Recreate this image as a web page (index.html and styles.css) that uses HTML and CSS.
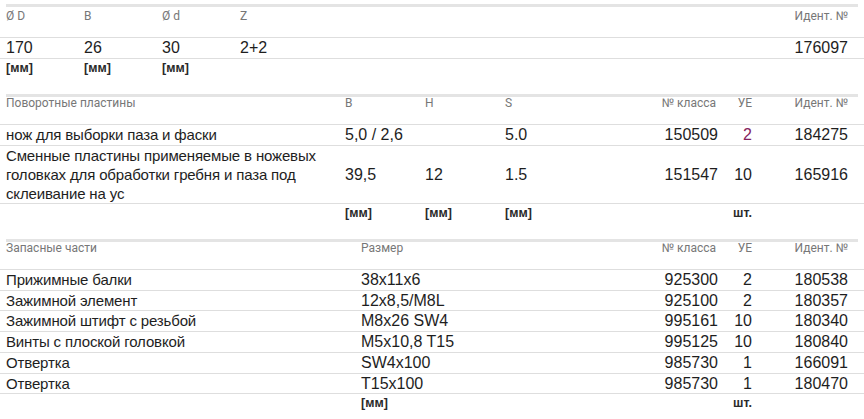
FILE: index.html
```html
<!DOCTYPE html>
<html lang="ru">
<head>
<meta charset="utf-8">
<title>Таблица</title>
<link rel="stylesheet" href="styles.css">
</head>
<body>
<section class="tbl t1">
  <div class="grid g1 head">
    <div>Ø D</div><div>B</div><div>Ø d</div><div>Z</div><div class="r">Идент. №</div>
  </div>
  <div class="grid g1 row">
    <div>170</div><div>26</div><div>30</div><div>2+2</div><div class="r">176097</div>
  </div>
  <div class="grid g1 units">
    <div>[мм]</div><div>[мм]</div><div>[мм]</div><div></div><div></div>
  </div>
</section>

<section class="tbl t2">
  <div class="grid g2 head">
    <div>Поворотные пластины</div><div>B</div><div>H</div><div>S</div><div class="r">№ класса</div><div class="r">УЕ</div><div class="r">Идент. №</div>
  </div>
  <div class="grid g2 row">
    <div class="name">нож для выборки паза и фаски</div><div>5,0 / 2,6</div><div></div><div>5.0</div><div class="r">150509</div><div class="r accent">2</div><div class="r">184275</div>
  </div>
  <div class="grid g2 row mid">
    <div class="name">Сменные пластины применяемые в ножевых головках для обработки гребня и паза под склеивание на ус</div><div>39,5</div><div>12</div><div>1.5</div><div class="r">151547</div><div class="r">10</div><div class="r">165916</div>
  </div>
  <div class="grid g2 units">
    <div></div><div>[мм]</div><div>[мм]</div><div>[мм]</div><div></div><div class="r">шт.</div><div></div>
  </div>
</section>

<section class="tbl t3">
  <div class="grid g3 head">
    <div>Запасные части</div><div>Размер</div><div class="r">№ класса</div><div class="r">УЕ</div><div class="r">Идент. №</div>
  </div>
  <div class="grid g3 row">
    <div class="name">Прижимные балки</div><div>38x11x6</div><div class="r">925300</div><div class="r">2</div><div class="r">180538</div>
  </div>
  <div class="grid g3 row">
    <div class="name">Зажимной элемент</div><div>12x8,5/M8L</div><div class="r">925100</div><div class="r">2</div><div class="r">180357</div>
  </div>
  <div class="grid g3 row">
    <div class="name">Зажимной штифт с резьбой</div><div>M8x26 SW4</div><div class="r">995161</div><div class="r">10</div><div class="r">180340</div>
  </div>
  <div class="grid g3 row">
    <div class="name">Винты с плоской головкой</div><div>M5x10,8 T15</div><div class="r">995125</div><div class="r">10</div><div class="r">180840</div>
  </div>
  <div class="grid g3 row">
    <div class="name">Отвертка</div><div>SW4x100</div><div class="r">985730</div><div class="r">1</div><div class="r">166091</div>
  </div>
  <div class="grid g3 row">
    <div class="name">Отвертка</div><div>T15x100</div><div class="r">985730</div><div class="r">1</div><div class="r">180470</div>
  </div>
  <div class="grid g3 units">
    <div></div><div>[мм]</div><div></div><div class="r">шт.</div><div></div>
  </div>
</section>
</body>
</html>
```

FILE: styles.css
```css
* { box-sizing: border-box; }
body {
  margin: 0;
  background: #fff;
  font-family: "Liberation Sans", Arial, sans-serif;
  color: #1e1e1e;
}
.tbl {
  border-top: 3px solid #e4e4e4;
  margin: 0 6px 19px 6px;
}
.t1 { margin-top: 4px; }
.grid {
  display: grid;
  margin: 0 -6px;
  padding: 0 16px 0 6px;
}
.g1 { grid-template-columns: 78px 78px 78px 1fr 120px; }
.g2 { grid-template-columns: 339px 80px 80px 1fr 80px 34px 96px; }
.g3 { grid-template-columns: 355px 1fr 80px 34px 96px; }
.r { text-align: right; }
.g2.head .r:nth-child(5), .g3.head .r:nth-child(3) { padding-right: 2px; }

.head {
  font-family: Roboto, "Liberation Sans", Arial, sans-serif;
  font-size: 12px;
  line-height: 13px;
  color: #777;
  padding-top: 0;
  padding-bottom: 14px;
  border-bottom: 1px solid #dedede;
}
.t1 .head { padding-top: 3px; padding-bottom: 14px; line-height: 13px; }
.row {
  font-size: 16px;
  line-height: 20px;
  border-bottom: 1px solid #dedede;
}
.row .name {
  font-size: 15px;
  letter-spacing: -0.15px;
}
.row.mid { line-height: 19px; align-items: center; }
.t3 .row { line-height: 19.7px; }
.accent { color: #84225d; }
.units {
  font-size: 12.5px;
  font-weight: 700;
  line-height: 14px;
  color: #2a2a2a;
  padding-top: 2px;
}
```
